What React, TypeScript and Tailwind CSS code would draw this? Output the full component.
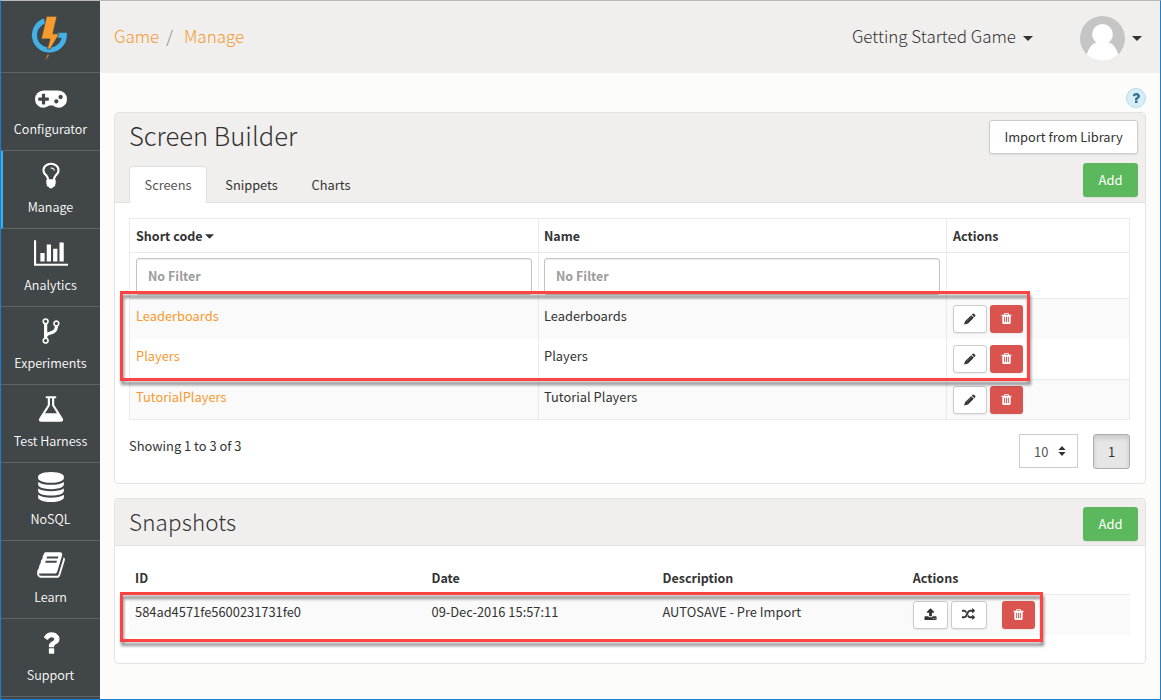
import type { ReactNode } from "react";

const FA = {
  gamepad:
    "M832 1088v-128q0-14-9-23t-23-9h-192v-192q0-14-9-23t-23-9h-128q-14 0-23 9t-9 23v192h-192q-14 0-23 9t-9 23v128q0 14 9 23t23 9h192v192q0 14 9 23t23 9h128q14 0 23-9t9-23v-192h192q14 0 23-9t9-23zm576 64q0-53-37.5-90.5t-90.5-37.5-90.5 37.5-37.5 90.5 37.5 90.5 90.5 37.5 90.5-37.5 37.5-90.5zm256-256q0-53-37.5-90.5t-90.5-37.5-90.5 37.5-37.5 90.5 37.5 90.5 90.5 37.5 90.5-37.5 37.5-90.5zm256 128q0 212-150 362t-362 150q-192 0-338-128h-220q-146 128-338 128-212 0-362-150t-150-362 150-362 362-150h896q212 0 362 150t150 362z",
  bulb:
    "M1120 608q0 13-9.5 22.5t-22.5 9.5-22.5-9.5-9.5-22.5q0-46-54-71t-106-25q-13 0-22.5-9.5t-9.5-22.5 9.5-22.5 22.5-9.5q50 0 99.5 16t87 54 37.5 90zm160 0q0-72-34.5-134t-90-101.5-123-62-136.5-22.5-136.5 22.5-123 62-90 101.5-34.5 134q0 101 68 180 10 11 30.5 33t30.5 33q128 153 141 298h228q13-145 141-298 10-11 30.5-33t30.5-33q68-79 68-180zm128 0q0 155-103 268-45 49-74.5 87t-59.5 95.5-34 107.5q47 28 47 82 0 37-25 64 25 27 25 64 0 52-45 81 13 23 13 47 0 46-31.5 71t-77.5 25q-20 44-60 70t-87 26-87-26-60-70q-46 0-77.5-25t-31.5-71q0-24 13-47-45-29-45-81 0-37 25-64-25-27-25-64 0-54 47-82-4-50-34-107.5t-59.5-95.5-74.5-87q-103-113-103-268 0-99 44.5-184.5t117-142 164-89 186.5-32.5 186.5 32.5 164 89 117 142 44.5 184.5z",
  chart:
    "M640 896v512h-256v-512h256zm384-512v1024h-256v-1024h256zm1024 1152v128h-2048v-1536h128v1408h1920zm-640-896v768h-256v-768h256zm384-384v1152h-256v-1152h256z",
  fork:
    "M672 1472q0-40-28-68t-68-28-68 28-28 68 28 68 68 28 68-28 28-68zm0-1152q0-40-28-68t-68-28-68 28-28 68 28 68 68 28 68-28 28-68zm640 128q0-40-28-68t-68-28-68 28-28 68 28 68 68 28 68-28 28-68zm96 0q0 52-26 96.5t-70 69.5q-2 287-226 414-67 38-203 81-128 40-169.5 71t-41.5 100v26q44 25 70 69.5t26 96.5q0 80-56 136t-136 56-136-56-56-136q0-52 26-96.5t70-69.5v-820q-44-25-70-69.5t-26-96.5q0-80 56-136t136-56 136 56 56 136q0 52-26 96.5t-70 69.5v497q54-26 154-57 55-17 87.5-29.5t70.5-31 59-39.5 40.5-51 28-69.5 8.5-91.5q-44-25-70-69.5t-26-96.5q0-80 56-136t136-56 136 56 56 136z",
  flask:
    "M1591 1448q56 89 21.5 152.5t-140.5 63.5h-1152q-106 0-140.5-63.5t21.5-152.5l503-793v-399h-64q-26 0-45-19t-19-45 19-45 45-19h512q26 0 45 19t19 45-19 45-45 19h-64v399zm-779-725l-272 429h712l-272-429-20-31v-436h-128v436z",
  database:
    "M896 768q237 0 443-43t325-127v170q0 69-103 128t-280 93.5-385 34.5-385-34.5-280-93.5-103-128v-170q119 84 325 127t443 43zm0 768q237 0 443-43t325-127v170q0 69-103 128t-280 93.5-385 34.5-385-34.5-280-93.5-103-128v-170q119 84 325 127t443 43zm0-384q237 0 443-43t325-127v170q0 69-103 128t-280 93.5-385 34.5-385-34.5-280-93.5-103-128v-170q119 84 325 127t443 43zm0-1152q208 0 385 34.5t280 93.5 103 128v128q0 69-103 128t-280 93.5-385 34.5-385-34.5-280-93.5-103-128v-128q0-69 103-128t280-93.5 385-34.5z",
  book:
    "M1703 478q40 57 18 129l-275 906q-19 64-76.5 107.5t-122.5 43.5h-923q-77 0-148.5-53.5t-99.5-131.5q-24-67-2-127 0-4 3-27t4-37q1-8-3-21.5t-3-19.5q2-11 8-21t16.5-23.5 16.5-23.5q23-38 45-91.5t30-91.5q3-10 .5-30t-.5-28q3-11 17-28t17-23q21-36 42-92t25-90q1-9-2.5-32t.5-28q4-13 22-30.5t22-22.5q19-26 42.5-84.5t27.5-96.5q1-8-3-25.5t-2-26.5q2-8 9-18t18-23 17-21q8-12 16.5-30.5t15-35 16-36 19.5-32 26.5-23.5 36-11.5 47.5 5.5l-1 3q38-9 51-9h761q74 0 114 56t18 130l-274 906q-36 119-71.5 153.5t-128.5 34.5h-869q-27 0-38 15-11 16-1 43 24 70 144 70h923q29 0 56-15.5t35-41.5l300-987q7-22 5-57 38 15 59 43zm-1064 2q-4 13 2 22.5t20 9.5h608q13 0 25.5-9.5t16.5-22.5l21-64q4-13-2-22.5t-20-9.5h-608q-13 0-25.5 9.5t-16.5 22.5zm-83 256q-4 13 2 22.5t20 9.5h608q13 0 25.5-9.5t16.5-22.5l21-64q4-13-2-22.5t-20-9.5h-608q-13 0-25.5 9.5t-16.5 22.5z",
  question:
    "M1088 1256v240q0 16-12 28t-28 12h-240q-16 0-28-12t-12-28v-240q0-16 12-28t28-12h240q16 0 28 12t12 28zm316-600q0 54-15.5 101t-35 76.5-55 59.5-57.5 43.5-61 35.5q-41 23-68.5 65t-27.5 67q0 17-12 32.5t-28 15.5h-240q-15 0-25.5-18.5t-10.5-37.5v-45q0-83 65-156.5t143-108.5q59-27 84-56t25-76q0-42-46.5-74t-107.5-32q-65 0-108 29-35 25-107 115-13 16-31 16-12 0-25-8l-164-125q-13-10-15.5-25t5.5-28q160-266 464-266 80 0 161 31t146 83 106 127.5 41 158.5z",
  trash:
    "M704 1376v-704q0-14-9-23t-23-9h-64q-14 0-23 9t-9 23v704q0 14 9 23t23 9h64q14 0 23-9t9-23zm256 0v-704q0-14-9-23t-23-9h-64q-14 0-23 9t-9 23v704q0 14 9 23t23 9h64q14 0 23-9t9-23zm256 0v-704q0-14-9-23t-23-9h-64q-14 0-23 9t-9 23v704q0 14 9 23t23 9h64q14 0 23-9t9-23zm-544-992h448l-48-117q-7-9-17-11h-317q-10 2-17 11zm928 32v64q0 14-9 23t-23 9h-96v948q0 83-47 143.5t-113 60.5h-832q-66 0-113-58.5t-47-141.5v-952h-96q-14 0-23-9t-9-23v-64q0-14 9-23t23-9h309l70-167q15-37 54-63t79-26h320q40 0 79 26t54 63l70 167h309q14 0 23 9t9 23z",
  upload:
    "M1344 1472q0-26-19-45t-45-19-45 19-19 45 19 45 45 19 45-19 19-45zm256 0q0-26-19-45t-45-19-45 19-19 45 19 45 45 19 45-19 19-45zm128-224v320q0 40-28 68t-68 28h-1472q-40 0-68-28t-28-68v-320q0-40 28-68t68-28h427q21 56 70.5 92t110.5 36h256q61 0 110.5-36t70.5-92h427q40 0 68 28t28 68zm-325-648q-17 40-59 40h-256v448q0 26-19 45t-45 19h-256q-26 0-45-19t-19-45v-448h-256q-42 0-59-40-17-39 14-69l448-448q18-19 45-19t45 19l448 448q31 30 14 69z",
  random:
    "M666 481q-60 92-137 273-22-45-37-72.5t-40.5-63.5-51-56.5-63-35-81.5-14.5h-224q-14 0-23-9t-9-23v-192q0-14 9-23t23-9h224q250 0 410 225zm1126 799q0 14-9 23l-320 320q-9 9-23 9-13 0-22.5-9.5t-9.5-22.5v-192q-32 0-85 .5t-81 1-73-1-71-5-64-10.5-63-18.5-58-28.5-59-40-55-53.5-56-69.5q59-93 136-273 22 45 37 72.5t40.5 63.5 51 56.5 63 35 81.5 14.5h256v-192q0-14 9-23t23-9q12 0 24 10l319 319q9 9 9 23zm0-896q0 14-9 23l-320 320q-9 9-23 9-13 0-22.5-9.5t-9.5-22.5v-192h-256q-48 0-87 15t-69 45-51 61.5-45 77.5q-32 62-78 171-29 66-49.5 111t-54 105-64 100-74 83-90 68.5-106.5 42-128 16.5h-224q-14 0-23-9t-9-23v-192q0-14 9-23t23-9h224q48 0 87-15t69-45 51-61.5 45-77.5q32-62 78-171 29-66 49.5-111t54-105 64-100 74-83 90-68.5 106.5-42 128-16.5h256v-192q0-14 9-23t23-9q12 0 24 10l319 319q9 9 9 23z",
};

function Icon({ d, w = 1792, className }: { d: string; w?: number; className: string }) {
  return (
    <svg viewBox={`0 0 ${w} 1792`} className={className} fill="currentColor">
      <path d={d} />
    </svg>
  );
}

function Pencil() {
  return (
    <svg viewBox="0 0 12 12" className="h-3 w-3" fill="currentColor">
      <path d="M0 11.6 1.2 7.9 7.2 2.2 9.8 4.8 4 10.6ZM7.8 1.6 8.7.8Q9.3.3 9.9.8L11.2 2.1Q11.8 2.7 11.2 3.3L10.4 4.2Z" />
      <path d="M2.4 8.4 7.4 3.5" stroke="#8a8a8a" strokeWidth=".5" />
    </svg>
  );
}

function Caret({ className }: { className: string }) {
  return (
    <svg viewBox="0 0 10 5" className={className} fill="currentColor">
      <path d="M0 0H10L5 5Z" />
    </svg>
  );
}

function Logo() {
  return (
    <svg viewBox="0 0 40 48" className="h-12 w-10">
      <path
        d="M15.6 6.9A15 15 0 1 0 35.4 21.2H28.4"
        fill="none"
        stroke="#43b1e5"
        strokeWidth="5"
      />
      <path
        d="M17.6 2.2H28L23.9 19.8H30.2L21.2 35H18.4L21 25H12.2Z"
        fill="#f79b2e"
        stroke="#434749"
        strokeWidth=".8"
      />
      <path d="M18.3 40.8H20.2L16.6 46.6Z" fill="#c98630" />
    </svg>
  );
}

const NAV: { label: string; d: string; w?: number; iconClass: string; active?: boolean }[] = [
  { label: "Configurator", d: FA.gamepad, w: 1920, iconClass: "h-[30px] w-8" },
  { label: "Manage", d: FA.bulb, iconClass: "h-[30px] w-[30px]", active: true },
  { label: "Analytics", d: FA.chart, w: 2048, iconClass: "h-[30px] w-[34px]" },
  { label: "Experiments", d: FA.fork, iconClass: "h-[30px] w-[30px]" },
  { label: "Test Harness", d: FA.flask, iconClass: "h-[30px] w-[30px]" },
  { label: "NoSQL", d: FA.database, iconClass: "h-[30px] w-[30px]" },
  { label: "Learn", d: FA.book, iconClass: "h-[30px] w-[30px]" },
  { label: "Support", d: FA.question, iconClass: "h-[30px] w-[30px]" },
];

function Sidebar() {
  return (
    <nav className="w-[99px] shrink-0 overflow-hidden bg-[#414648] text-white">
      <div className="flex h-[72px] justify-center border-b border-[#5f6466] pt-[13px] pr-[3px]">
        <Logo />
      </div>
      {NAV.map((n) => (
        <div
          key={n.label}
          className={`flex h-[78px] flex-col items-center border-b border-b-[#5f6466] pt-[9px] ${
            n.active ? "border-l-2 border-l-[#3eb0e8] pr-[2px]" : ""
          }`}
        >
          <Icon d={n.d} w={n.w} className={n.iconClass} />
          <span className="mt-[7px] text-[12.6px] leading-5 font-[350]">{n.label}</span>
        </div>
      ))}
    </nav>
  );
}

function Btn({ children, className }: { children: ReactNode; className: string }) {
  return (
    <button
      className={`flex shrink-0 items-center justify-center rounded-[3px] shadow-[0_1px_2px_rgba(0,0,0,0.08)] ${className}`}
    >
      {children}
    </button>
  );
}

function DeleteBtn() {
  return (
    <Btn className="h-7 w-[33px] bg-[#d9534f] pb-px text-white">
      <Icon d={FA.trash} className="h-[13px] w-[13px]" />
    </Btn>
  );
}

function AddBtn() {
  return (
    <Btn className="h-[34px] w-[55px] bg-[#5cb85c] text-[13px] text-white">Add</Btn>
  );
}

const ROWS = [
  { code: "Leaderboards", name: "Leaderboards", row: "h-10 bg-[#fafafa]" },
  { code: "Players", name: "Players", row: "h-10 bg-white" },
  { code: "TutorialPlayers", name: "Tutorial Players", row: "h-10 border-t bg-[#fafafa]" },
];

function Filter() {
  return (
    <input
      placeholder="No Filter"
      className="h-[37px] w-[396px] rounded-[3px] border border-[#c4c4c4] bg-white px-[11px] pt-0 pb-[2px] text-[12.5px] font-semibold shadow-[inset_0_1px_1px_rgba(0,0,0,0.075)] placeholder:text-[#9c9c9c]"
    />
  );
}

const GRID = "grid grid-cols-[409px_408px_183px] border-[#eaeaea]";
const COL = "border-r border-[#eaeaea] pl-1.5";
const COL_NAME = "border-r border-[#eaeaea] pl-[5px]";

function ScreenTable() {
  return (
    <div className="mx-[14px] mt-[15px] w-[1001px] border border-r-0 border-[#eaeaea] leading-5">
      <div className={`${GRID} h-[33px] text-[12.5px] font-semibold`}>
        <div className={`${COL} flex items-center pt-px`}>
          Short code
          <Caret className="ml-[2px] h-[5px] w-[9px]" />
        </div>
        <div className={`${COL_NAME} flex items-center pt-px`}>Name</div>
        <div className={`${COL} flex items-center pt-px`}>Actions</div>
      </div>
      <div className={`${GRID} h-[46px] border-t`}>
        <div className={`${COL} pt-[5px]`}>
          <Filter />
        </div>
        <div className={`${COL_NAME} pt-[5px]`}>
          <Filter />
        </div>
        <div className={COL} />
      </div>
      <div className="border-t border-[#eaeaea]">
        {ROWS.map((r) => (
          <div key={r.code} className={`${GRID} ${r.row}`}>
            <div className={`${COL} pt-[7px] text-[#f8992f]`}>{r.code}</div>
            <div className={`${COL_NAME} pt-[7px]`}>{r.name}</div>
            <div className={`${COL} flex gap-[3px] pt-1.5`}>
              <Btn className="h-7 w-[34px] border border-[#ccc] bg-white">
                <Pencil />
              </Btn>
              <DeleteBtn />
            </div>
          </div>
        ))}
      </div>
    </div>
  );
}

function Highlight({ className }: { className: string }) {
  return (
    <div
      className={`pointer-events-none absolute border-3 border-[#fb4443] drop-shadow-[1px_4px_1.5px_rgba(0,0,0,0.45)] ${className}`}
    />
  );
}

function ScreenPanel() {
  return (
    <section className="mt-1 h-[372px] w-[1032px] overflow-hidden rounded border border-[#e3e3e3] bg-white">
      <div className="flex h-[90px] justify-between bg-[#f0efed] pr-[7px] pl-[14px] shadow-[inset_0_-1px_0_#e3e3e3]">
        <div className="flex flex-col">
          <h1 className="mt-px text-[25.6px] leading-[42px] font-light">Screen Builder</h1>
          <div className="mt-[10px] flex h-[37px] text-[12.8px]">
            <div className="w-[78px] rounded-t border border-b-0 border-[#dfdfdf] bg-white pt-[8px] text-center leading-5 text-[#555]">
              Screens
            </div>
            <div className="w-[89px] pt-[9px] text-center leading-5">Snippets</div>
            <div className="w-[70px] pt-[9px] text-center leading-5">Charts</div>
          </div>
        </div>
        <div className="flex flex-col items-end gap-[9px] pt-[7px]">
          <Btn className="h-[34px] w-[149px] border border-[#ccc] bg-white">Import from Library</Btn>
          <AddBtn />
        </div>
      </div>
      <ScreenTable />
      <div className="mt-[14px] mr-[15px] ml-[14px] flex">
        <span className="mt-[2px] leading-5">Showing 1 to 3 of 3</span>
        <div className="ml-auto flex h-[34px] w-[59px] items-center border border-[#ccc] pt-px pl-[14px] text-[#555]">
          10
          <svg viewBox="0 0 8 10" className="mb-[2px] ml-[10px] h-[10px] w-2" fill="#333">
            <path d="M4 0 7.6 4H.4ZM4 10 .4 6H7.6Z" />
          </svg>
        </div>
        <button className="ml-[15px] h-[35px] w-[37px] rounded-[3px] border border-[#adadad] bg-[#e6e6e6] pt-px shadow-[inset_0_3px_5px_rgba(0,0,0,0.125)]">
          1
        </button>
      </div>
    </section>
  );
}

const SNAP = "grid grid-cols-[296.5px_231px_250.3px_1fr] pl-1.5";

function SnapshotPanel() {
  return (
    <section className="mt-[14px] h-[166px] w-[1032px] overflow-hidden rounded border border-[#e3e3e3] bg-white">
      <div className="flex h-[47px] justify-between border-b border-[#e3e3e3] bg-[#f0efed] pt-2 pr-[7px] pl-[14px]">
        <h2 className="-mt-[7px] text-[22.4px] leading-[42px] font-light tracking-[0.15px]">Snapshots</h2>
        <AddBtn />
      </div>
      <div className="mx-[14px] mt-[15px] w-[1001px] leading-5">
        <div className={`${SNAP} h-[33px] pt-[7px] text-[12.5px] font-semibold`}>
          <div>ID</div>
          <div>Date</div>
          <div>Description</div>
          <div>Actions</div>
        </div>
        <div className={`${SNAP} h-[41px] border-t border-[#eaeaea] bg-[#fafafa]`}>
          <div className="pt-[7px]">584ad4571fe5600231731fe0</div>
          <div className="pt-[7px]">09-Dec-2016 15:57:11</div>
          <div className="pt-[7px]">AUTOSAVE - Pre Import</div>
          <div className="flex pt-1.5">
            <Btn className="h-7 w-[35px] border border-[#ccc] bg-white pb-px">
              <Icon d={FA.upload} className="h-[13px] w-[13px]" />
            </Btn>
            <Btn className="ml-[3px] h-7 w-9 border border-[#ccc] bg-white pb-px">
              <Icon d={FA.random} className="h-[13px] w-[13px]" />
            </Btn>
            <div className="w-[15px]" />
            <DeleteBtn />
          </div>
        </div>
      </div>
    </section>
  );
}

export default function App() {
  return (
    <div className="relative flex h-[700px] w-[1161px] overflow-hidden border border-[#1b7fd4] border-t-[#b9b9b9] bg-[#fcfcfa] font-['Noto_Sans_CJK_SC','Open_Sans',sans-serif] text-[12.87px] text-[#333]">
      <Sidebar />
      <main className="flex min-w-0 flex-1 flex-col">
        <header className="flex h-[72px] shrink-0 items-center bg-[#f0efed] pr-[18px] pb-[2px] pl-[14px] text-[17px] font-light">
          <div className="flex items-center text-[#f8992f]">
            <span>Game</span>
            <span className="ml-[7px] text-[#888]">/</span>
            <span className="ml-[11px]">Manage</span>
          </div>
          <div className="ml-auto flex items-center">
            <span>Getting Started Game</span>
            <Caret className="mt-1 ml-[7px] h-[5px] w-[10px]" />
            <svg viewBox="0 0 45 45" className="mt-1 ml-[47px] h-[45px] w-[45px]">
              <clipPath id="avatar">
                <circle cx="22.5" cy="22.5" r="22.5" />
              </clipPath>
              <g clipPath="url(#avatar)">
                <rect width="45" height="45" fill="#c5c5c5" />
                <circle cx="22.5" cy="18.3" r="10.4" fill="#fff" />
                <path d="M6 40Q10 27 17 26.4H28Q35 27 39 40V45H6Z" fill="#fff" />
              </g>
            </svg>
            <Caret className="mt-1 ml-[7px] h-[5px] w-[10px]" />
          </div>
        </header>
        <div className="flex flex-col pl-[14px]">
          <div className="mt-[15px] flex w-[1032px] justify-end">
            <span className="flex h-5 w-5 items-center justify-center rounded-full border border-[#b5ddf0] bg-[#d9edf7] text-[#31708f]">
              <Icon d={FA.question} className="h-[14px] w-[14px]" />
            </span>
          </div>
          <ScreenPanel />
          <SnapshotPanel />
        </div>
      </main>
      <Highlight className="top-[290px] left-[119px] h-[90px] w-[910px]" />
      <Highlight className="top-[591px] left-[119px] h-[50px] w-[923px]" />
    </div>
  );
}
